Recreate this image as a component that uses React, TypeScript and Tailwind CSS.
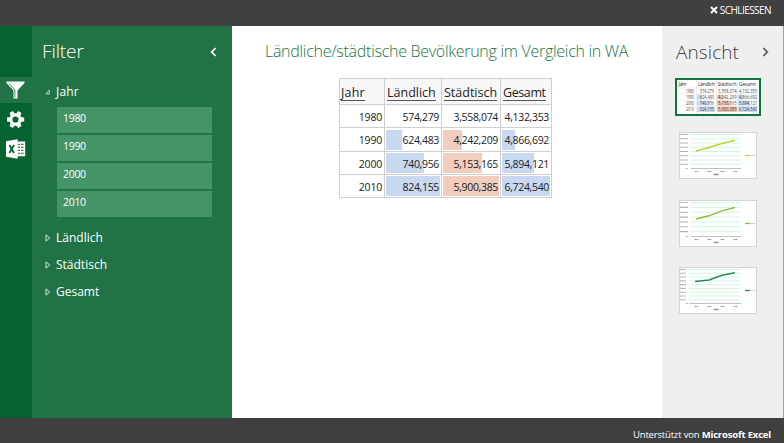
import React from "react";

const years = ["1980", "1990", "2000", "2010"];

const columns = [
  { name: "Jahr", track: "tracking-[0.2px]", pad: "pl-px" },
  { name: "Ländlich", track: "tracking-[0px]", pad: "pl-[2px]" },
  { name: "Städtisch", track: "tracking-[0px]", pad: "pl-[2px]" },
  { name: "Gesamt", track: "tracking-[-0.4px]", pad: "pl-[2px]" },
];

const rows = [
  { year: "1980", values: ["574,279", "3,558,074", "4,132,353"], bars: [0, 0, 0] },
  { year: "1990", values: ["624,483", "4,242,209", "4,866,692"], bars: [16, 19, 13] },
  { year: "2000", values: ["740,956", "5,153,165", "5,894,121"], bars: [38, 39, 32] },
  { year: "2010", values: ["824,155", "5,900,385", "6,724,540"], bars: [54, 56, 48] },
];

const barColors = ["bg-[#c9d8f1]", "bg-[#f1cdbd]", "bg-[#c9d8f1]"];

function FilterIcon() {
  return (
    <svg width="20" height="18" viewBox="0 0 20 18">
      <path d="M0.5 0.5H18.5V2L11.5 9.5V17.5H7.5V9.5L0.5 2Z" fill="#fff" />
      <path d="M3 2.5L8.9 9V16.5" fill="none" stroke="#217346" strokeWidth="0.8" />
    </svg>
  );
}

function GearIcon() {
  return (
    <svg width="18" height="18" viewBox="-8.5 -8.5 18 18">
      <g fill="#fff">
        <circle r="6.3" />
        {[0, 60, 120, 180, 240, 300].map((a) => (
          <path key={a} d="M-2.3 -5L-1.9 -8.7H1.9L2.3 -5Z" transform={`rotate(${a + 30})`} />
        ))}
      </g>
      <circle r="3.1" fill="#05632f" />
    </svg>
  );
}

function ExcelIcon() {
  return (
    <svg width="20" height="20" viewBox="0 0 20 20">
      <path d="M11 2.5H19.2V17.3H11Z" fill="#fff" />
      <path d="M11.5 5.3H17.6M11.5 8.3H17.6M11.5 11.3H17.6M11.5 14.3H17.6" stroke="#05632f" strokeWidth="1" />
      <path d="M14.5 4V16" stroke="#fff" strokeWidth="1" />
      <path d="M0 2.3L11.6 0.3V19.7L0 17.7Z" fill="#fff" />
      <path d="M3.4 6L8 14M8 6L3.4 14" stroke="#05632f" strokeWidth="1.8" />
    </svg>
  );
}

function Chevron({ dir, color }: { dir: "left" | "right"; color: string }) {
  return (
    <svg width="7" height="10" viewBox="0 0 7 10">
      <path d={dir === "left" ? "M5.7 1L1.7 5L5.7 9" : "M1.3 1L5.3 5L1.3 9"} fill="none" stroke={color} strokeWidth="1.7" />
    </svg>
  );
}

function ClosedGroup({ name }: { name: string }) {
  return (
    <div className="flex h-[27px] items-center">
      <svg width="6" height="8" viewBox="0 0 6 8" className="mr-[5px]">
        <path d="M1 0.9L4.8 4L1 7.1Z" fill="none" stroke="#e4f0e9" strokeWidth="0.9" />
      </svg>
      <span className="text-[12px] leading-none font-medium text-white">{name}</span>
    </div>
  );
}

function TableThumb() {
  return (
    <svg width="86" height="38" viewBox="0 0 86 38" className="font-['Open_Sans',sans-serif]">
      <rect x="1" y="1" width="84" height="36" fill="#fff" stroke="#107540" strokeWidth="2" />
      <g fill="#c9d8f1">
        <rect x="22" y="16.5" width="5" height="5" />
        <rect x="22" y="22.5" width="12" height="5" />
        <rect x="22" y="28.5" width="18" height="5.5" />
        <rect x="63" y="16.5" width="5" height="5" />
        <rect x="63" y="22.5" width="12" height="5" />
        <rect x="63" y="28.5" width="19" height="5.5" />
      </g>
      <g fill="#f1c2ad">
        <rect x="42" y="16.5" width="6" height="5" />
        <rect x="42" y="22.5" width="14" height="5" />
        <rect x="42" y="28.5" width="20" height="5.5" />
      </g>
      <path
        d="M2 10H84M2 16H84M2 22H84M2 28H84M21.5 2V36M41.5 2V36M62.5 2V36"
        stroke="#e3e3e3"
        strokeWidth="0.6"
      />
      <g fontSize="5" fill="#333">
        <text x="3.5" y="8.2" textLength="8">Jahr</text>
        <text x="23" y="8.2" textLength="17">Ländlich</text>
        <text x="42.5" y="8.2" textLength="19">Städtisch</text>
        <text x="64" y="8.2" textLength="17">Gesamt</text>
      </g>
      <g fontSize="4.6" fill="#444">
        {rows.map((r, i) => (
          <g key={r.year}>
            <text x="11" y={15 + i * 6.1} textLength="8" lengthAdjust="spacingAndGlyphs">{r.year}</text>
            <text x="25" y={15 + i * 6.1} textLength="14" lengthAdjust="spacingAndGlyphs">{r.values[0]}</text>
            <text x="43" y={15 + i * 6.1} textLength="18.5" lengthAdjust="spacingAndGlyphs">{r.values[1]}</text>
            <text x="64" y={15 + i * 6.1} textLength="18" lengthAdjust="spacingAndGlyphs">{r.values[2]}</text>
          </g>
        ))}
      </g>
    </svg>
  );
}

function ChartThumb({
  lines,
  step,
  points,
  color,
  left,
}: {
  lines: number;
  step: number;
  points: string;
  color: string;
  left: number;
}) {
  const grid = Array.from({ length: lines }, (_, i) => 2.5 + i * step);
  return (
    <svg width="78" height="47" viewBox="0 0 78 47">
      <rect x="0.5" y="0.5" width="77" height="46" fill="#fff" stroke="#d4d4d4" />
      {grid.map((y) => (
        <g key={y}>
          <path d={`M${left + 1} ${y}H61.5`} stroke="#ccf5dd" strokeWidth="0.9" />
          <path d={`M1 ${y}H${left - 2}`} stroke="#a8a8a8" strokeWidth="1.1" strokeDasharray="1.4 0.3" />
        </g>
      ))}
      <path d={`M${left + 1} 36.5H62`} stroke="#c0c0c0" />
      <path d="M7 36.5H8.5" stroke="#999" />
      <path d="M15.5 39.5H19.5M28.5 39.5H32.5M41.5 39.5H45.5M54.5 39.5H58.5" stroke="#959595" strokeWidth="1.2" strokeDasharray="1.7 0.4" />
      <path d="M35 42.5H39.5" stroke="#777" strokeWidth="1.3" strokeDasharray="1 0.2" />
      <polyline points={points} fill="none" stroke={color} strokeWidth="1.4" />
      <path d="M66 23.5H71" stroke={color} strokeWidth="1.3" />
      <path d="M71.5 23.5H76" stroke="#bdbdbd" strokeWidth="1" strokeDasharray="1.3 0.5" />
    </svg>
  );
}

export default function App() {
  return (
    <div className="flex h-[443px] w-[784px] flex-col overflow-hidden bg-white font-['Open_Sans','Noto_Sans',sans-serif]">
      <header className="flex h-[26px] items-start justify-end bg-[#404040] pt-[4px] pr-[13px]">
        <div className="flex h-[12px] items-center gap-[2px] text-white">
          <svg width="8" height="8" viewBox="0 0 8 8">
            <path d="M1 1L7 7M7 1L1 7" stroke="#fff" strokeWidth="1.9" />
          </svg>
          <span className="text-[10px] leading-none tracking-[-0.55px]">SCHLIESSEN</span>
        </div>
      </header>

      <div className="flex h-[392px]">
        <nav className="flex w-[32px] flex-col items-center bg-[#05632f] pt-[51px]">
          <div className="flex h-[26px] w-full items-center justify-center bg-[#217346]">
            <FilterIcon />
          </div>
          <div className="flex h-[33px] items-center">
            <GearIcon />
          </div>
          <div className="flex h-[26px] items-center">
            <ExcelIcon />
          </div>
        </nav>

        <aside className="w-[200px] bg-[#217346]">
          <div className="flex h-[51px] items-center justify-between pr-[15px] pl-[10px]">
            <h1 className="text-[19px] leading-none font-light tracking-[-0.1px] text-white">Filter</h1>
            <Chevron dir="left" color="#fff" />
          </div>
          <div className="flex h-[30px] items-center pl-[13px]">
            <svg width="5" height="6" viewBox="0 0 5 6" className="mr-[6px]">
              <path d="M4.3 1V5H0.8Z" fill="none" stroke="#d7e8de" strokeWidth="0.8" />
            </svg>
            <span className="text-[12px] leading-none font-medium tracking-[0.2px] text-white">Jahr</span>
          </div>
          <div className="flex flex-col gap-[2px] pl-[25px]">
            {years.map((y) => (
              <div key={y} className="h-[26px] w-[155px] bg-[#459467] pt-[5px] pl-[6px]">
                <div className="text-[10.5px] leading-[12px] font-medium tracking-[-0.3px] text-white">{y}</div>
              </div>
            ))}
          </div>
          <div className="pt-[7px] pl-[13px]">
            <ClosedGroup name="Ländlich" />
            <ClosedGroup name="Städtisch" />
            <ClosedGroup name="Gesamt" />
          </div>
        </aside>

        <main className="flex w-[430px] flex-col pl-[33px]">
          <h2 className="mt-[15px] h-[20px] text-[16px] leading-[20px] font-light tracking-[-0.28px] whitespace-nowrap text-[#217346]">
            Ländliche/städtische Bevölkerung im Vergleich in WA
          </h2>
          <div className="mt-[17px] ml-[74px] grid w-[213px] grid-cols-[45px_57px_59px_51px] grid-rows-[26px_23px_24px_23px_23px] border-t border-l border-[#cfcfcf]">
            {columns.map((c) => (
              <div key={c.name} className={"flex items-start border-r border-b border-[#cfcfcf] bg-[#f7f7f7] pt-[6px] " + c.pad}>
                <span className={"h-[16px] border-b border-[#555] text-[12.5px] leading-[15px] text-[#222] " + c.track}>{c.name}</span>
              </div>
            ))}
            {rows.map((r) => (
              <React.Fragment key={r.year}>
                <div className="flex items-center justify-end border-r border-b border-[#cfcfcf] pt-[2px] pr-[2px] text-[10.5px] leading-none tracking-[-0.2px] text-[#222]">
                  {r.year}
                </div>
                {r.values.map((v, i) => (
                  <div key={v} className="grid items-center border-r border-b border-[#cfcfcf]">
                    <div className={"col-start-1 row-start-1 ml-px h-[20px] " + barColors[i]} style={{ width: r.bars[i] }} />
                    <div className="col-start-1 row-start-1 pt-[2px] pr-[2px] text-right text-[10.5px] leading-none tracking-[-0.33px] text-[#222]">{v}</div>
                  </div>
                ))}
              </React.Fragment>
            ))}
          </div>
        </main>

        <aside className="w-[122px] border-r border-[#a0a0a0] bg-[#efefef]">
          <div className="flex h-[52px] items-center justify-between pr-[14px] pl-[14px]">
            <h1 className="text-[19px] leading-none font-light tracking-[0.1px] text-[#404040]">Ansicht</h1>
            <Chevron dir="right" color="#555" />
          </div>
          <div className="flex flex-col pl-[13px]">
            <TableThumb />
            <div className="mt-[16px] ml-[4px] flex flex-col">
              <ChartThumb lines={8} step={4.25} points="17,19 30,15.5 43,11.5 56,8.3" color="#c3d02f" left={11} />
              <div className="mt-[21px]">
                <ChartThumb lines={7} step={4.86} points="17,19 30,15.8 43,10.8 56,7.5" color="#8fbb3a" left={11} />
              </div>
              <div className="mt-[20px]">
                <ChartThumb lines={9} step={3.78} points="16,14.5 30,13 43,8.3 56,5.7" color="#2c8858" left={9} />
              </div>
            </div>
          </div>
        </aside>
      </div>

      <footer className="flex h-[25px] items-center justify-end bg-[#3f3f3f] pt-[8px] pr-[13px] text-[9.5px] leading-none text-white">
        <span className="tracking-[-0.18px]">
          Unterstützt von <b>Microsoft Excel</b>
        </span>
      </footer>
    </div>
  );
}
